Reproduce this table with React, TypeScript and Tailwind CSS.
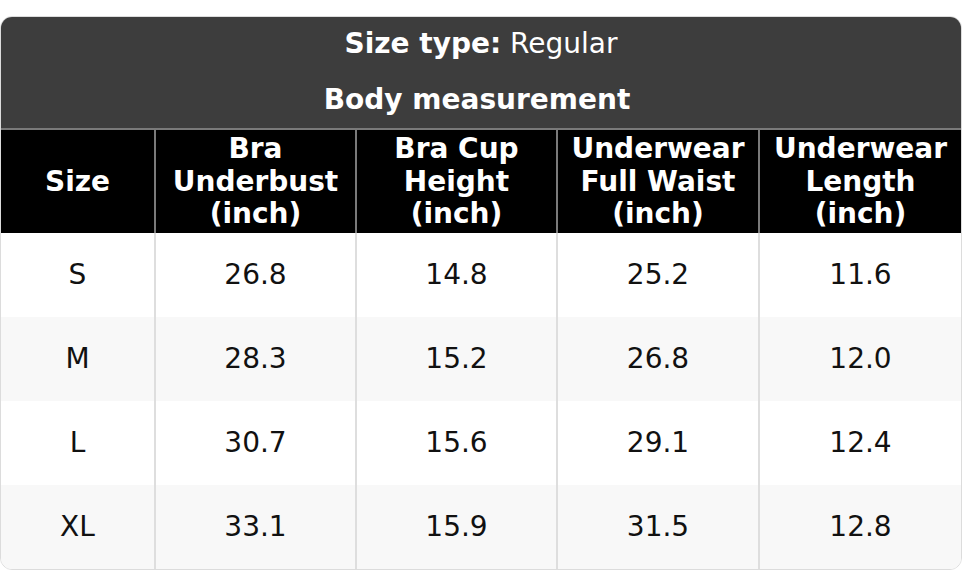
import React from "react";

const headers = [
  ["Size"],
  ["Bra", "Underbust", "(inch)"],
  ["Bra Cup", "Height", "(inch)"],
  ["Underwear", "Full Waist", "(inch)"],
  ["Underwear", "Length", "(inch)"],
];

const rows = [
  ["S", "26.8", "14.8", "25.2", "11.6"],
  ["M", "28.3", "15.2", "26.8", "12.0"],
  ["L", "30.7", "15.6", "29.1", "12.4"],
  ["XL", "33.1", "15.9", "31.5", "12.8"],
];

export default function App() {
  return (
    <div
      className="w-[962px] h-[571px] bg-white pt-4"
      style={{ fontFamily: '"DejaVu Sans", sans-serif' }}
    >
      <div className="w-[962px] h-[554px] rounded-[12px] border border-[#dcdcdc] overflow-hidden flex flex-col text-[28px] leading-[32.5px]">
        <div className="bg-[#3d3d3d] text-white border-b-2 border-[#7a7a7a]">
          <div className="h-[54px] flex items-center justify-center">
            <span className="font-bold">Size type:</span>
            <span>&nbsp;Regular</span>
          </div>
          <div className="h-[57px] flex items-center justify-center font-bold pr-[8px] pt-px">
            Body measurement
          </div>
        </div>
        <div className="grid grid-cols-[155px_201px_201px_202px_1fr] bg-black text-white font-bold h-[103px]">
          {headers.map((h, i) => (
            <div
              key={i}
              className={`flex flex-col items-center justify-center text-center pt-px ${
                i < 4 ? "border-r-2 border-[#7a7a7a]" : ""
              }`}
            >
              {h.map((line, j) => (
                <div key={j}>{line}</div>
              ))}
            </div>
          ))}
        </div>
        {rows.map((r, ri) => (
          <div
            key={ri}
            className={`grid grid-cols-[155px_201px_201px_202px_1fr] h-[84px] text-[#111] ${
              ri % 2 === 1 ? "bg-[#f8f8f8]" : "bg-white"
            }`}
          >
            {r.map((c, ci) => (
              <div
                key={ci}
                className={`flex items-center justify-center pt-px ${
                  ci < 4 ? "border-r-2 border-[#dedede]" : ""
                }`}
              >
                {c}
              </div>
            ))}
          </div>
        ))}
      </div>
    </div>
  );
}
